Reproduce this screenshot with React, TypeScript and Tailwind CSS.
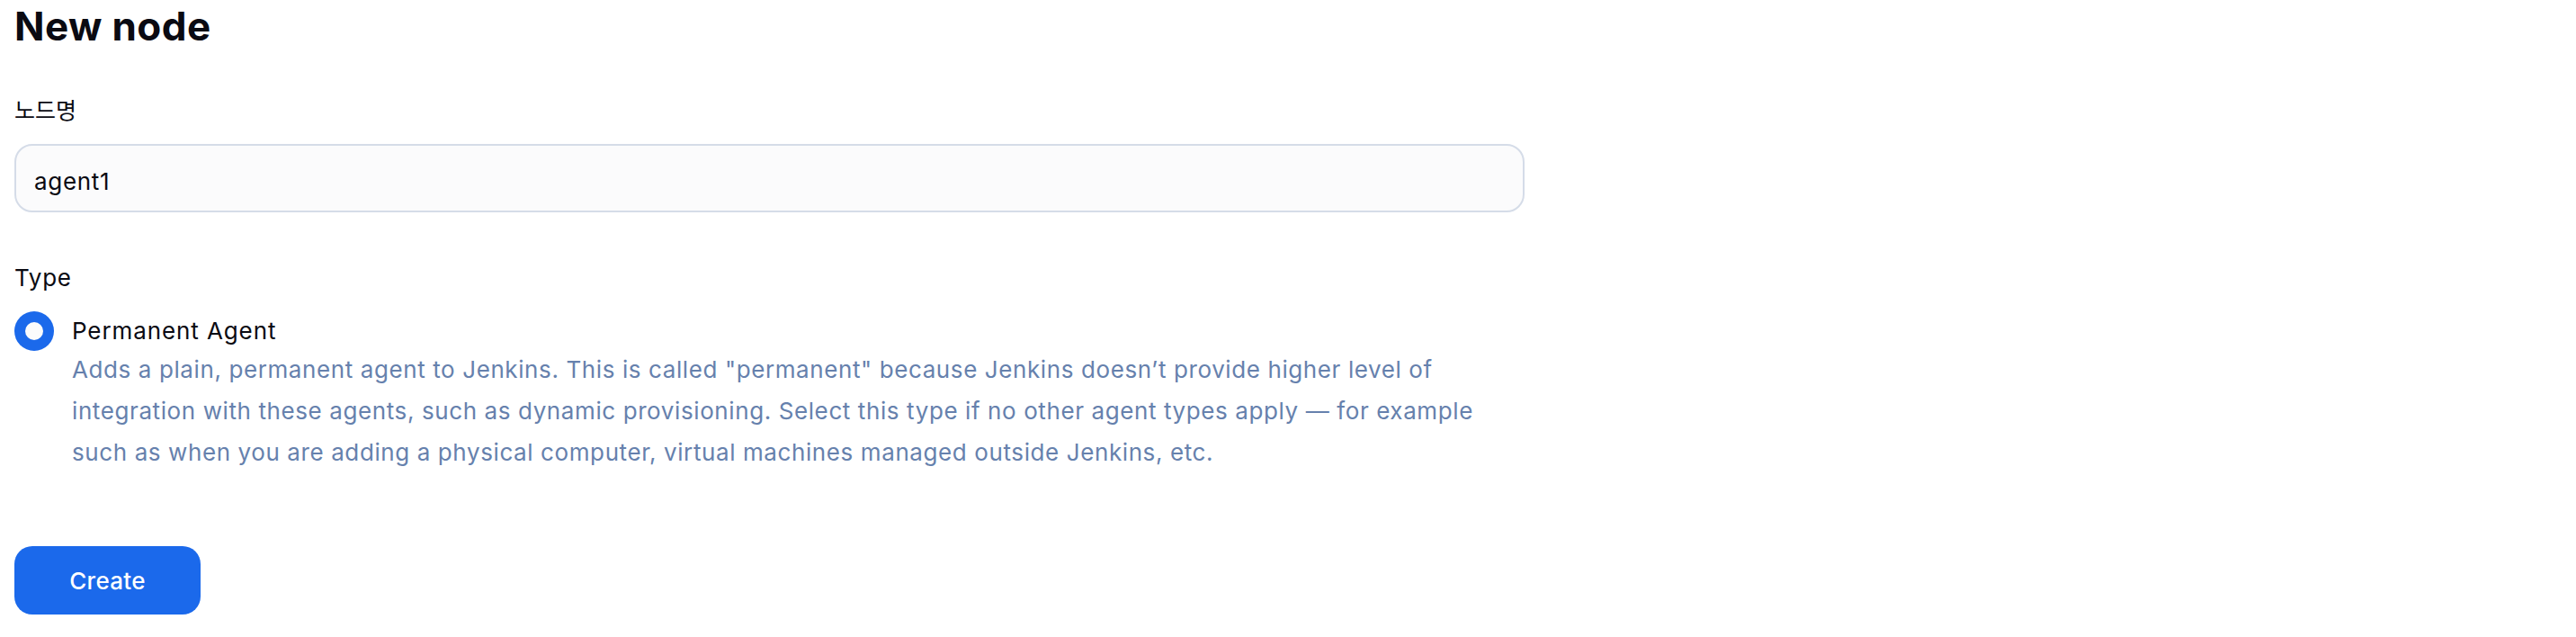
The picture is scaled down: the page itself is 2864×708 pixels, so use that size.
const FONT = "font-['Inter','Noto_Sans_CJK_KR',sans-serif]";

function RadioDot() {
  return (
    <span className="flex h-[44px] w-[44px] shrink-0 items-center justify-center rounded-full bg-[#1b69eb]">
      <span className="h-[20px] w-[20px] rounded-full bg-[#fbfbfc]" />
    </span>
  );
}

export default function App() {
  return (
    <div className={`${FONT} min-h-[708px] bg-white px-4 pt-[7px] text-[#0a0a12]`}>
      <div className="w-[1679px]">
        <h1 className="text-[44px] leading-[44px] font-bold tracking-[0.4px]">New node</h1>

        <label className="mt-[59px] block text-[25px] leading-[26px]">노드명</label>
        <input
          className="mt-[24px] block h-[76px] w-full rounded-[20px] border-2 border-[#d5dce8] bg-[#fbfbfc] pt-[6px] pl-[20px] text-[26px] tracking-[0.7px] text-[#0a0a12] outline-none"
          defaultValue="agent1"
          readOnly
        />

        <div className="mt-[60px] text-[26px] leading-[26px] tracking-[0.7px]">Type</div>

        <div className="mt-[24px] flex items-start gap-[20px]">
          <RadioDot />
          <div className="flex-1 text-[26px]">
            <div className="leading-[44px] tracking-[0.9px]">Permanent Agent</div>
            <p className="-mt-[2px] leading-[46px] tracking-[0.6px] text-[#6681ad]">
              Adds a plain, permanent agent to Jenkins. This is called "permanent" because Jenkins
              doesn’t provide higher level of integration with these agents, such as dynamic
              provisioning. Select this type if no other agent types apply — for example such as
              when you are adding a physical computer, virtual machines managed outside Jenkins,
              etc.
            </p>
          </div>
        </div>

        <button
          type="button"
          className="mt-[81px] h-[76px] w-[207px] rounded-[20px] bg-[#1b69eb] text-[26px] font-medium tracking-[0.3px] text-white"
        >
          Create
        </button>
      </div>
    </div>
  );
}
